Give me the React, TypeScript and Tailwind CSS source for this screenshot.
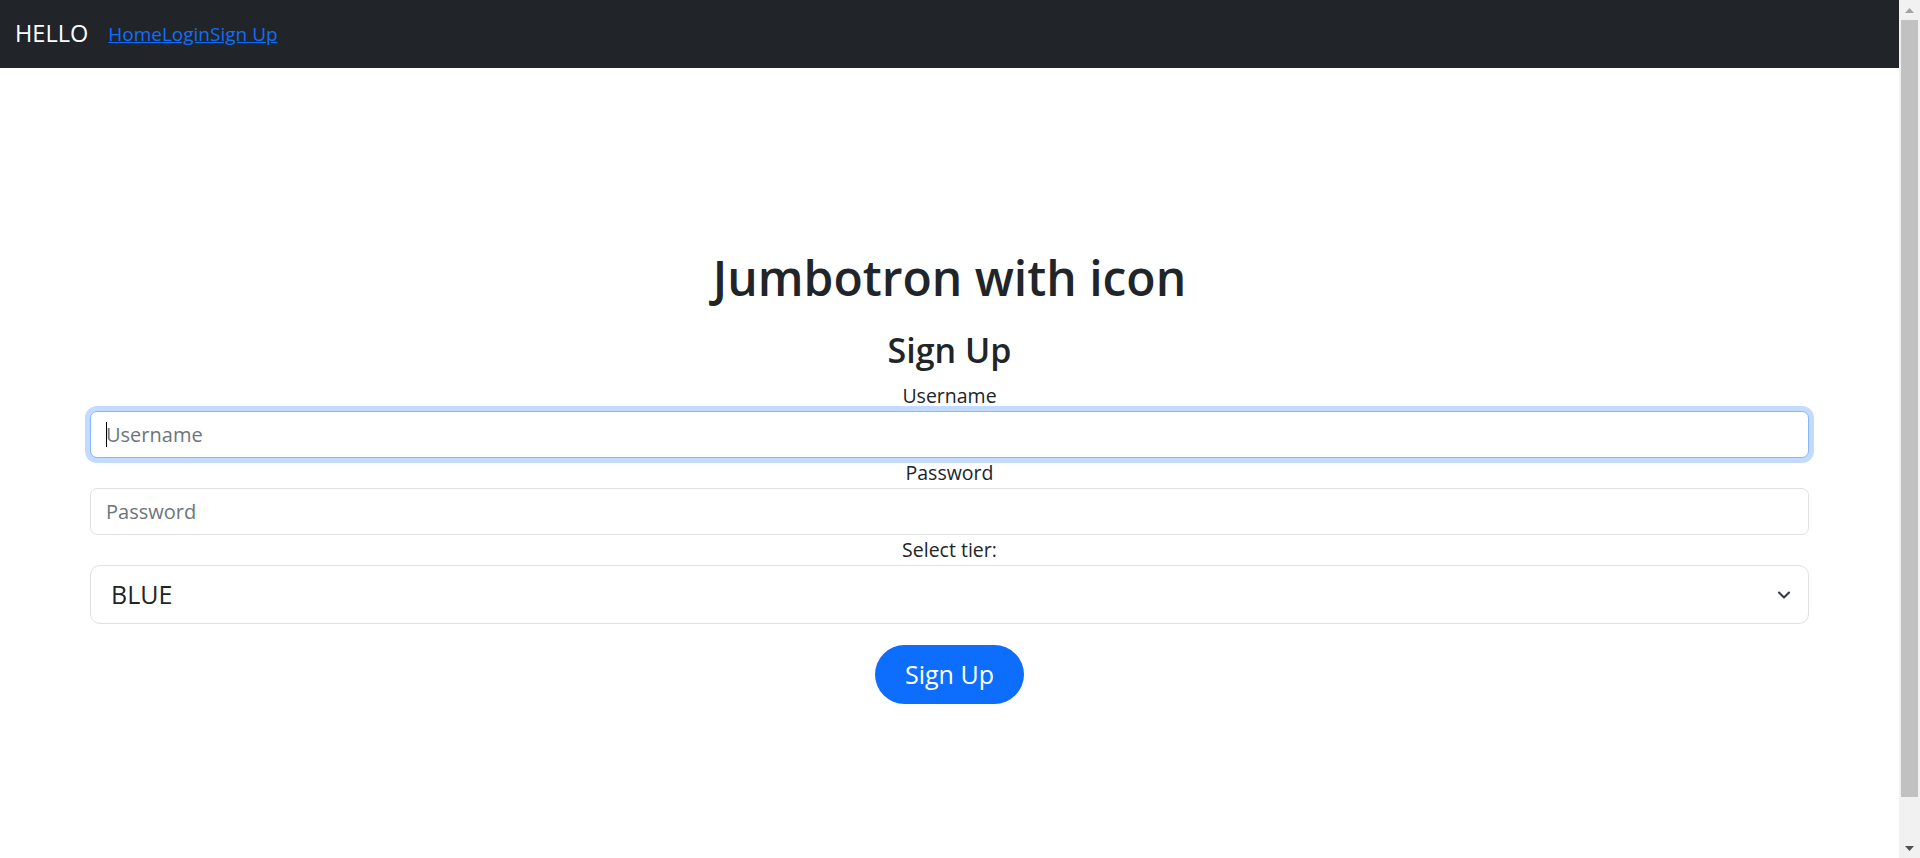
import { ChevronDown } from "lucide-react"

const font = "font-['Segoe_UI','Open_Sans',sans-serif]"

function Field({ label, placeholder, focused }: { label: string; placeholder: string; focused?: boolean }) {
  return (
    <>
      <label className="block text-center text-[19.5px] leading-[30px] text-[#212529]">{label}</label>
      <div className="relative">
        <input
          type={label === "Password" ? "password" : "text"}
          placeholder={placeholder}
          className={
            focused
              ? "block h-[47px] w-full rounded-[7px] border border-[#86b7fe] bg-white px-[15px] text-[20px] text-[#212529] outline-none shadow-[0_0_0_5px_rgba(13,110,253,0.25)] placeholder:text-[#6c757d]"
              : "block h-[47px] w-full rounded-[7px] border border-[#dee2e6] bg-white px-[15px] text-[20px] text-[#212529] outline-none placeholder:text-[#6c757d]"
          }
        />
        {/* caret */}
        {focused && <span className="pointer-events-none absolute left-[16px] top-[11px] h-[25px] w-px bg-black" />}
      </div>
    </>
  )
}

function Scrollbar() {
  return (
    <div className="flex h-full w-[21px] shrink-0 flex-col bg-[#f1f1f1]">
      <div className="flex h-[20px] items-center justify-center">
        <svg width="9" height="5" viewBox="0 0 9 5">
          <path d="M4.5 0 9 5H0z" fill="#a3a3a3" />
        </svg>
      </div>
      <div className="mx-[2px] h-[777px] bg-[#c1c1c1]" />
      <div className="flex-1" />
      <div className="flex h-[20px] items-center justify-center">
        <svg width="9" height="5" viewBox="0 0 9 5">
          <path d="M0 0h9L4.5 5z" fill="#505050" />
        </svg>
      </div>
    </div>
  )
}

export default function App() {
  return (
    <div className={`flex h-[858px] w-full overflow-hidden bg-white ${font}`}>
      <div className="flex min-w-0 flex-1 flex-col">
        {/* Navbar */}
        <nav className="flex h-[68px] shrink-0 items-center bg-[#212529] px-[15px]">
          <span className="mr-[20px] text-[23.5px] leading-none text-white">HELLO</span>
          <a href="#" className="text-[19px] text-[#0d6efd] underline">Home</a>
          <a href="#" className="text-[19px] text-[#0d6efd] underline">Login</a>
          <a href="#" className="text-[19px] text-[#0d6efd] underline">Sign Up</a>
        </nav>

        {/* Jumbotron */}
        <section className="px-[90px] pt-[180px] text-center">
          <h1 className="text-[48px] font-semibold leading-[60px] text-[#212529]">Jumbotron with icon</h1>
          <h3 className="mt-[22px] mb-[10px] text-[34px] font-semibold leading-[41px] text-[#212529]">Sign Up</h3>

          <form className="text-left">
            <Field label="Username" placeholder="Username" focused />
            <Field label="Password" placeholder="Password" />

            <label className="block text-center text-[19.5px] leading-[30px] text-[#212529]">Select tier:</label>
            <div className="relative">
              <select className="block h-[59px] w-full appearance-none rounded-[10px] border border-[#dee2e6] bg-white pl-[20px] text-[25px] text-[#212529] outline-none">
                <option>BLUE</option>
                <option>SILVER</option>
                <option>GOLD</option>
              </select>
              <ChevronDown
                className="pointer-events-none absolute right-[15px] top-1/2 h-[20px] w-[20px] -translate-y-1/2 text-[#343a40]"
                strokeWidth={2.5}
              />
            </div>

            <div className="mt-[21px] flex justify-center">
              <button type="button" className="h-[59px] rounded-full bg-[#0d6efd] px-[30px] text-[25px] text-white">
                Sign Up
              </button>
            </div>
          </form>
        </section>
      </div>
      <Scrollbar />
    </div>
  )
}
